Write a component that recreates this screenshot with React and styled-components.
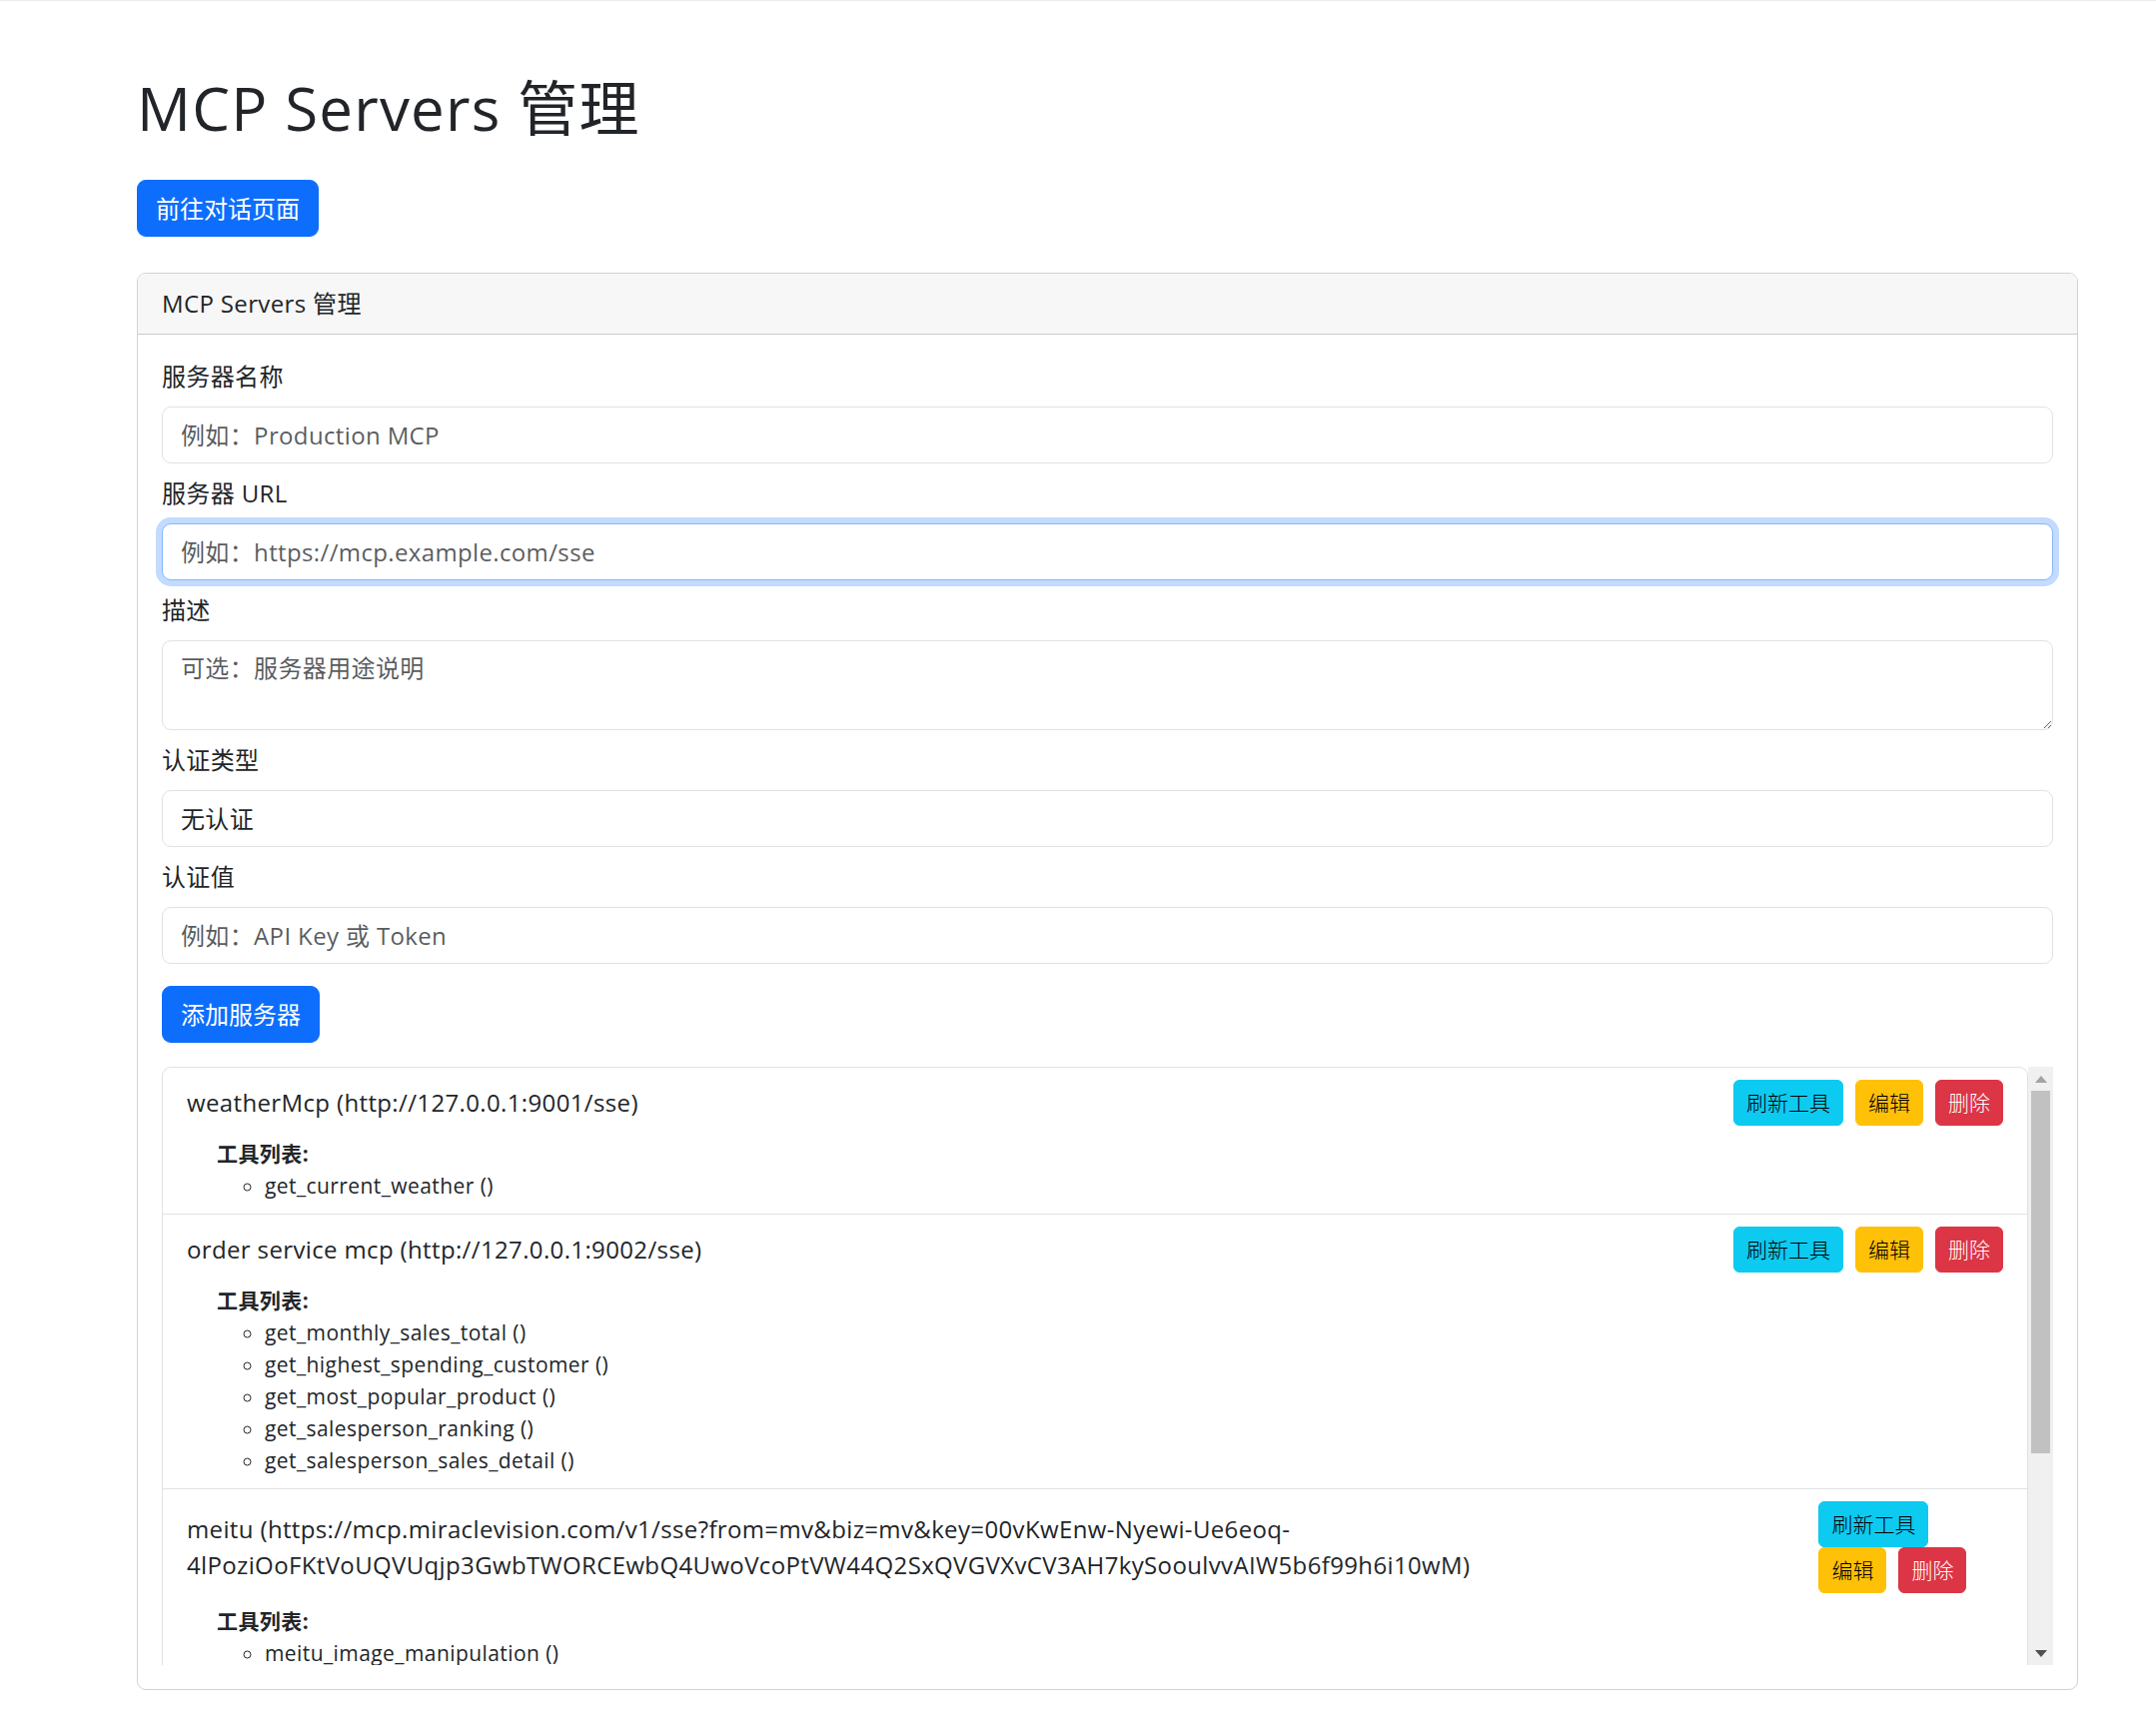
import React from 'react';
import styled, { createGlobalStyle, css } from 'styled-components';

const GlobalStyle = createGlobalStyle`
  * { box-sizing: border-box; }
  html, body { margin: 0; padding: 0; background: #fff; }
  body {
    font-family: "Open Sans", "Noto Sans CJK SC", sans-serif;
    font-size: 24px;
    line-height: 1.5;
    letter-spacing: 0.015em;
    color: #212529;
    border-top: 1px solid #ebebeb;
  }
`;

const Page = styled.div`
  width: 1943px;
  margin-left: 137px;
  padding-top: 71px;
`;

const Title = styled.h1`
  margin: 0 0 36px;
  font-size: 60px;
  line-height: 72px;
  font-weight: 400;
  letter-spacing: 0.02em;
  color: #212529;
`;

const TopActions = styled.div`
  margin-bottom: 36px;
`;

const PrimaryButton = styled.button`
  display: inline-flex;
  align-items: center;
  height: 57px;
  padding: 0 18px;
  border: 1px solid #0d6efd;
  border-radius: 9px;
  background: #0d6efd;
  color: #fff;
  font-family: inherit;
  font-size: 24px;
  line-height: 36px;
  letter-spacing: 0;
  cursor: pointer;
  margin-top: ${p => p.$mt || 0}px;
`;

const Card = styled.section`
  border: 1px solid rgba(0, 0, 0, 0.175);
  border-radius: 9px;
  overflow: hidden;
`;

const CardHeader = styled.div`
  padding: 12px 24px;
  line-height: 36px;
  background: #f7f7f7;
  border-bottom: 1px solid rgba(0, 0, 0, 0.175);
`;

const CardBody = styled.div`
  padding: 24px;
`;

const Field = styled.div`
  margin-bottom: 12px;
`;

const Label = styled.label`
  display: block;
  margin-bottom: 12px;
  line-height: 36px;
`;

const controlBase = css`
  display: block;
  width: 100%;
  padding: 9px 18px;
  border: 1px solid #dee2e6;
  border-radius: 9px;
  background: #fff;
  color: #212529;
  font-family: inherit;
  font-size: 24px;
  line-height: 36px;
  letter-spacing: inherit;
  outline: none;
  &::placeholder { color: rgba(33, 37, 41, 0.75); }
  ${p => p.$focused && css`
    border-color: #86b7fe;
    box-shadow: 0 0 0 6px rgba(13, 110, 253, 0.25);
  `}
`;

const Input = styled.input`
  ${controlBase}
  height: 57px;
`;

const TextArea = styled.textarea`
  ${controlBase}
  height: 90px;
  resize: vertical;
`;

const Select = styled.select`
  ${controlBase}
  height: 57px;
  appearance: none;
  -webkit-appearance: none;
`;

const ScrollArea = styled.div`
  display: flex;
  margin-top: 24px;
  height: 599px;
`;

const Viewport = styled.div`
  flex: 1 1 auto;
  min-width: 0;
  overflow: hidden;
`;

const ScrollTrack = styled.div`
  flex: 0 0 25px;
  display: flex;
  flex-direction: column;
  background: #f0f0f0;
`;

const ScrollArrow = styled.div`
  flex: 0 0 24px;
  display: flex;
  align-items: center;
  justify-content: center;
  margin-top: ${p => (p.$down ? 'auto' : '0')};
`;

const ScrollThumb = styled.div`
  height: 363px;
  margin: 0 3px;
  background: #c1c1c1;
`;

const ListGroup = styled.ul`
  list-style: none;
  margin: 0;
  padding: 0;
  border: 1px solid #dee2e6;
  border-radius: 9px;
`;

const ListItem = styled.li`
  padding: 12px 24px;
  border-bottom: 1px solid #dee2e6;
  &:last-child { border-bottom: 0; }
`;

const ItemHeader = styled.div`
  display: flex;
  justify-content: space-between;
  align-items: center;
`;

const ServerTitle = styled.div`
  line-height: 36px;
`;

const ButtonGroup = styled.div`
  display: flex;
  flex-wrap: wrap;
  gap: 0 12px;
`;

const variants = {
  info: { bg: '#0dcaf0', fg: '#000' },
  warning: { bg: '#ffc107', fg: '#000' },
  danger: { bg: '#dc3545', fg: '#fff' },
};

const SmallButton = styled.button`
  height: 46px;
  padding: 0 12px;
  border: 1px solid ${p => variants[p.$variant].bg};
  border-radius: 6px;
  background: ${p => variants[p.$variant].bg};
  color: ${p => variants[p.$variant].fg};
  font-family: inherit;
  font-size: 21px;
  font-weight: 300;
  line-height: 31px;
  letter-spacing: 0;
  white-space: nowrap;
  cursor: pointer;
`;

const Tools = styled.div`
  margin: 12px 0 0 30px;
  font-size: 21px;
  line-height: 32px;
  letter-spacing: 0.02em;
`;

const ToolsTitle = styled.strong`
  display: block;
  font-weight: 700;
`;

const ToolList = styled.ul`
  margin: 0;
  padding-left: 48px;
  list-style-type: circle;
`;

const servers = [
  {
    name: 'weatherMcp',
    url: 'http://127.0.0.1:9001/sse',
    tools: ['get_current_weather'],
  },
  {
    name: 'order service mcp',
    url: 'http://127.0.0.1:9002/sse',
    tools: [
      'get_monthly_sales_total',
      'get_highest_spending_customer',
      'get_most_popular_product',
      'get_salesperson_ranking',
      'get_salesperson_sales_detail',
    ],
  },
  {
    name: 'meitu',
    url: 'https://mcp.miraclevision.com/v1/sse?from=mv&biz=mv&key=00vKwEnw-Nyewi-Ue6eoq-4lPoziOoFKtVoUQVUqjp3GwbTWORCEwbQ4UwoVcoPtVW44Q2SxQVGVXvCV3AH7kySooulvvAIW5b6f99h6i10wM',
    tools: ['meitu_image_manipulation'],
  },
];

function BreakableUrl({ url }) {
  const parts = url.split('-');
  return parts.map((part, i) => (
    <React.Fragment key={i}>
      {part}
      {i < parts.length - 1 && (<>-<wbr /></>)}
    </React.Fragment>
  ));
}

function Triangle({ down, color }) {
  return (
    <svg width="12" height="7" viewBox="0 0 12 7" aria-hidden="true">
      <polygon points={down ? '0,0 12,0 6,7' : '0,7 12,7 6,0'} fill={color} />
    </svg>
  );
}

export default function App() {
  return (
    <>
      <GlobalStyle />
      <Page>
        <Title>MCP Servers 管理</Title>
        <TopActions>
          <PrimaryButton>前往对话页面</PrimaryButton>
        </TopActions>
        <Card>
          <CardHeader>MCP Servers 管理</CardHeader>
          <CardBody>
            <Field>
              <Label>服务器名称</Label>
              <Input placeholder="例如：Production MCP" />
            </Field>
            <Field>
              <Label>服务器 URL</Label>
              <Input $focused autoFocus placeholder="例如：https://mcp.example.com/sse" />
            </Field>
            <Field>
              <Label>描述</Label>
              <TextArea placeholder="可选：服务器用途说明" />
            </Field>
            <Field>
              <Label>认证类型</Label>
              <Select defaultValue="none">
                <option value="none">无认证</option>
              </Select>
            </Field>
            <Field>
              <Label>认证值</Label>
              <Input placeholder="例如：API Key 或 Token" />
            </Field>
            <PrimaryButton $mt={10}>添加服务器</PrimaryButton>
            <ScrollArea>
              <Viewport>
                <ListGroup>
                  {servers.map(s => (
                    <ListItem key={s.name}>
                      <ItemHeader>
                        <ServerTitle>
                          {s.name} (<BreakableUrl url={s.url} />)
                        </ServerTitle>
                        <ButtonGroup>
                          <SmallButton $variant="info">刷新工具</SmallButton>
                          <SmallButton $variant="warning">编辑</SmallButton>
                          <SmallButton $variant="danger">删除</SmallButton>
                        </ButtonGroup>
                      </ItemHeader>
                      <Tools>
                        <ToolsTitle>工具列表:</ToolsTitle>
                        <ToolList>
                          {s.tools.map(t => (
                            <li key={t}>{t} ()</li>
                          ))}
                        </ToolList>
                      </Tools>
                    </ListItem>
                  ))}
                </ListGroup>
              </Viewport>
              <ScrollTrack>
                <ScrollArrow>
                  <Triangle color="#a3a3a3" />
                </ScrollArrow>
                <ScrollThumb />
                <ScrollArrow $down>
                  <Triangle down color="#505050" />
                </ScrollArrow>
              </ScrollTrack>
            </ScrollArea>
          </CardBody>
        </Card>
      </Page>
    </>
  );
}
